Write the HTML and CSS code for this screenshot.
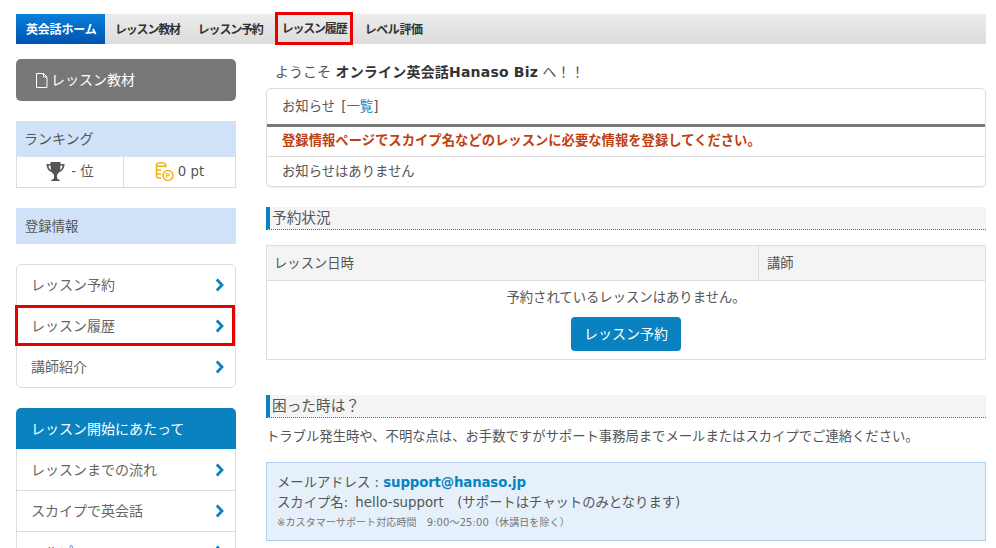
FILE: index.html
```html
<!DOCTYPE html>
<html lang="ja">
<head>
<meta charset="utf-8">
<title>英会話ホーム</title>
<link rel="stylesheet" href="styles.css">
</head>
<body>
<nav class="topnav">
  <a class="tab tab-active">英会話ホーム</a>
  <a class="tab">レッスン教材</a>
  <a class="tab">レッスン予約</a>
  <a class="tab tab-marked">レッスン履歴</a>
  <a class="tab tab-level">レベル評価</a>
</nav>
<div class="columns">
  <aside class="side">
    <a class="material-btn">
      <svg class="doc-icon" width="13" height="15" viewBox="0 0 13 15"><path d="M1.500 .5h7l3.500 3.500v10.500h-10.500z M8.500 .5v3.500h3.500" fill="none" stroke="#fff" stroke-width="1"/></svg>
      レッスン教材
    </a>
    <section class="rank">
      <div class="side-head">ランキング</div>
      <div class="rank-row">
        <div class="rank-cell rank-first">
          <svg width="19" height="20" viewBox="0 0 18 20"><path d="M4 0h10v2h4c0 4-2 7-5 8-1 1-2 2-2.500 3v3c0 1 2 1 3 3H4.500c1-2 3-2 3-3v-3c-.5-1-1.500-2-2.500-3-3-1-5-4-5-8h4z M2 3.500c0 2 1 3.500 2.300 4.500L4 3.500z M16 3.500c0 2-1 3.500-2.300 4.500l.3-4.500z" fill="#555" fill-rule="evenodd"/></svg>
          <span>- 位</span>
        </div>
        <div class="rank-cell">
          <svg width="19" height="20" viewBox="0 0 19 20"><g fill="none" stroke="#f5b50f" stroke-width="1.600"><ellipse cx="6" cy="2.500" rx="4.500" ry="1.700"/><path d="M1.500 2.500v4c0 1 2 1.700 4.500 1.700 M10.500 2.500v3 M1.500 6.500v4c0 1 2 1.700 4.500 1.700 M1.500 10.500v4c0 1 2 1.700 4.500 1.700"/><circle cx="13" cy="13.500" r="5"/></g><text x="13" y="16" font-size="7" font-family="Liberation Sans" font-weight="700" text-anchor="middle" fill="#f5b50f">P</text></svg>
          <span>0 pt</span>
        </div>
      </div>
    </section>
    <div class="side-head side-reg">登録情報</div>
    <ul class="menu menu-box">
      <li class="menu-item"><span>レッスン予約</span><svg class="chev" width="9" height="14" viewBox="0 0 9 14"><path d="M1.800 1.500L7 7l-5.200 5.500" fill="none" stroke="#0a82c0" stroke-width="2.800"/></svg></li>
      <li class="menu-item menu-marked"><span>レッスン履歴</span><svg class="chev" width="9" height="14" viewBox="0 0 9 14"><path d="M1.800 1.500L7 7l-5.200 5.500" fill="none" stroke="#0a82c0" stroke-width="2.800"/></svg></li>
      <li class="menu-item"><span>講師紹介</span><svg class="chev" width="9" height="14" viewBox="0 0 9 14"><path d="M1.800 1.500L7 7l-5.200 5.500" fill="none" stroke="#0a82c0" stroke-width="2.800"/></svg></li>
    </ul>
    <div class="start-head">レッスン開始にあたって</div>
    <ul class="menu menu-open">
      <li class="menu-item"><span>レッスンまでの流れ</span><svg class="chev" width="9" height="14" viewBox="0 0 9 14"><path d="M1.800 1.500L7 7l-5.200 5.500" fill="none" stroke="#0a82c0" stroke-width="2.800"/></svg></li>
      <li class="menu-item"><span>スカイプで英会話</span><svg class="chev" width="9" height="14" viewBox="0 0 9 14"><path d="M1.800 1.500L7 7l-5.200 5.500" fill="none" stroke="#0a82c0" stroke-width="2.800"/></svg></li>
      <li class="menu-item"><span>ヘルプ</span><svg class="chev" width="9" height="14" viewBox="0 0 9 14"><path d="M1.800 1.500L7 7l-5.200 5.500" fill="none" stroke="#0a82c0" stroke-width="2.800"/></svg></li>
    </ul>
  </aside>
  <main class="main">
    <p class="welcome">ようこそ <b>オンライン英会話Hanaso Biz</b> へ！！</p>
    <section class="notice">
      <div class="notice-title">お知らせ [<a class="link">一覧</a>]</div>
      <div class="notice-alert">登録情報ページでスカイプ名などのレッスンに必要な情報を登録してください。</div>
      <div class="notice-row">お知らせはありません</div>
    </section>
    <h2 class="heading">予約状況</h2>
    <section class="table">
      <div class="thead">
        <div class="th th-date">レッスン日時</div>
        <div class="th th-teacher">講師</div>
      </div>
      <div class="tbody">
        <p class="empty">予約されているレッスンはありません。</p>
        <a class="reserve-btn">レッスン予約</a>
      </div>
    </section>
    <h2 class="heading heading-help">困った時は？</h2>
    <p class="help-text">トラブル発生時や、不明な点は、お手数ですがサポート事務局までメールまたはスカイプでご連絡ください。</p>
    <section class="contact">
      <div>メールアドレス : <a class="mail">support@hanaso.jp</a></div>
      <div class="contact-skype">スカイプ名: hello-support　(サポートはチャットのみとなります)</div>
      <div class="contact-note">※カスタマーサポート対応時間　9:00～25:00（休講日を除く）</div>
    </section>
  </main>
</div>
</body>
</html>
```
FILE: styles.css
```css
* { box-sizing: border-box; }
html, body { margin: 0; height: 548px; overflow: hidden; }
body {
  padding: 14px 10px 0 16px;
  background: #fff;
  color: #555;
  font-family: "DejaVu Sans", "Noto Sans CJK JP", sans-serif;
  font-size: 13.33px;
  line-height: 20px;
}
ul { list-style: none; margin: 0; padding: 0; }
p { margin: 0; }

.topnav {
  display: flex;
  height: 30px;
  background: linear-gradient(#ececec, #dcdcdc);
}
.tab {
  display: flex;
  align-items: center;
  padding: 2px 8px 0 10px;
  font-size: 12px;
  font-weight: 700;
  letter-spacing: -1.2px;
  color: #333;
}
.tab-active {
  width: 89px;
  padding: 2px 0 0 10px;
  background: linear-gradient(#0a7fd8, #0052b0);
  color: #fff;
  letter-spacing: -.2px;
}
.tab-marked {
  width: 78px;
  height: 33px;
  margin: -2px 0 0 4px;
  padding: 1px 0 0 4px;
  border: 3px solid #e60000;
}
.tab-level { padding-left: 12px; letter-spacing: -.4px; }

.columns { display: flex; gap: 30px; margin-top: 15px; }
.side { width: 220px; flex: none; }
.main { width: 720px; flex: none; }

.material-btn {
  display: flex;
  align-items: center;
  gap: 3px;
  height: 42px;
  padding-left: 19px;
  border-radius: 5px;
  background: #777;
  color: #fff;
  font-size: 14px;
}
.rank { margin-top: 20px; }
.side-head {
  display: flex;
  align-items: center;
  height: 36px;
  padding-left: 8px;
  background: #cfe2f7;
  color: #555;
  font-size: 14px;
}
.side-reg { margin-top: 20px; padding: 2px 0 0 9px; font-size: 13.33px; }
.rank-row {
  display: flex;
  height: 31px;
  border: 1px solid #ddd;
  border-top: 0;
}
.rank-cell {
  flex: 1;
  display: flex;
  align-items: center;
  justify-content: center;
  gap: 4px;
}
.rank-first { flex: none; width: 106px; gap: 6px; }
.rank-cell + .rank-cell { border-left: 1px solid #ddd; }

.menu { background: #fff; }
.menu-box {
  margin-top: 20px;
  border: 1px solid #ddd;
  border-radius: 5px;
}
.menu-box .menu-item:first-child { margin-top: -1px; }
.menu-open { border: 1px solid #ddd; border-top: 0; }
.menu-item {
  position: relative;
  display: flex;
  align-items: center;
  justify-content: space-between;
  height: 41px;
  padding: 0 11px 0 14px;
  font-size: 14px;
  color: #666;
}
.menu-item + .menu-item { border-top: 1px solid #ddd; }
.menu-box .menu-item + .menu-item { border-top: 0; }
.menu-marked::after {
  content: "";
  position: absolute;
  inset: 0 0 0 -2px;
  border: 3px solid #e60000;
  pointer-events: none;
}
.start-head {
  display: flex;
  align-items: center;
  height: 41px;
  margin-top: 20px;
  padding-left: 15px;
  border-radius: 5px 5px 0 0;
  background: #0a82c0;
  color: #fff;
  font-size: 14px;
}

.welcome { margin: 3px 0 0 9px; height: 26px; font-size: 14px; line-height: 20px; }
.welcome b { color: #333; letter-spacing: .2px; }
.notice {
  height: 99px;
  border: 1px solid #ddd;
  border-radius: 5px;
  box-shadow: 0 1px 1px rgba(0,0,0,.08);
}
.notice-title {
  height: 38px;
  padding: 8px 15px 0;
  border-bottom: 3px solid #777;
  word-spacing: 2px;
}
.link { color: #0a82c0; }
.notice-alert {
  height: 30px;
  padding: 4px 15px 0;
  border-bottom: 1px solid #ddd;
  color: #c0400f;
  font-weight: 700;
}
.notice-row { padding: 5px 15px 0; }
.heading {
  height: 23px;
  margin: 20px 0 0;
  padding-left: 2px;
  border-left: 4px solid #0a82c0;
  border-bottom: 1px dotted #0a82c0;
  background: #f4f4f4;
  color: #555;
  font-size: 14.67px;
  font-weight: 400;
  line-height: 22px;
}
.table {
  height: 115px;
  margin-top: 15px;
  border: 1px solid #ddd;
}
.thead {
  display: flex;
  height: 35px;
  border-bottom: 1px solid #ddd;
  background: #f4f4f4;
}
.th { padding: 8px 8px 0; }
.th-date { width: 492px; padding-left: 7px; border-right: 1px solid #ddd; }
.tbody {
  display: flex;
  flex-direction: column;
  align-items: center;
  padding-top: 7px;
}
.reserve-btn {
  display: flex;
  align-items: center;
  justify-content: center;
  width: 110px;
  height: 34px;
  margin-top: 9px;
  border-radius: 4px;
  background: #0a82c0;
  color: #fff;
  font-size: 14px;
}
.heading-help { margin-top: 35px; }
.help-text { margin-top: 9px; white-space: nowrap; }
.contact {
  height: 79px;
  margin-top: 15px;
  padding: 10px 10px 0;
  border: 1px solid #aed0f0;
  background: #e5f0fb;
  line-height: 19.5px;
}
.contact-skype { word-spacing: 3px; }
.mail { color: #0a82c0; font-weight: 700; letter-spacing: -.15px; }
.contact-note { margin-top: 1px; font-size: 10px; color: #777; letter-spacing: .1px; }
```
